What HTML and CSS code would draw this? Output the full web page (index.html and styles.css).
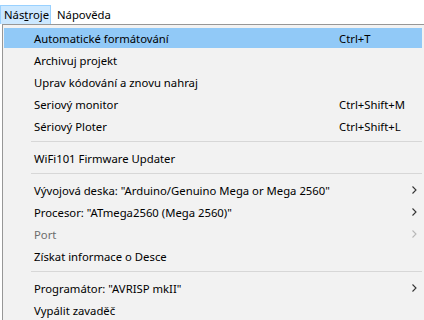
FILE: index.html
```html
<html>
<head>
	<title>Nástroje</title>
	<meta charset='UTF-8'>
	<link rel="stylesheet" href="styles.css">
</head>
<body>
	<div class='menubar'>
		<span class='top open'>Nás<u>t</u>roje</span>
		<span class='top'>Nápověda</span>
	</div>
	<div class='popup'>
		<div class='item hot'><span class='label'>Automatické formátování</span><span class='keys'>Ctrl+T</span></div>
		<div class='item'><span class='label'>Archivuj projekt</span></div>
		<div class='item'><span class='label'>Uprav kódování a znovu nahraj</span></div>
		<div class='item'><span class='label'>Seriový monitor</span><span class='keys'>Ctrl+Shift+M</span></div>
		<div class='item'><span class='label'>Sériový Ploter</span><span class='keys'>Ctrl+Shift+L</span></div>
		<div class='sep'></div>
		<div class='item'><span class='label'>WiFi101 Firmware Updater</span></div>
		<div class='sep'></div>
		<div class='item'><span class='label'>Vývojová deska: "Arduino/Genuino Mega or Mega 2560"</span>
			<svg class='arrow' width='5' height='8' viewBox='0 0 5 8'><path d='M0.5 0.5 L4 4 L0.5 7.5' fill='none' stroke='#333' stroke-width='1.1'/></svg></div>
		<div class='item'><span class='label'>Procesor: "ATmega2560 (Mega 2560)"</span>
			<svg class='arrow' width='5' height='8' viewBox='0 0 5 8'><path d='M0.5 0.5 L4 4 L0.5 7.5' fill='none' stroke='#333' stroke-width='1.1'/></svg></div>
		<div class='item off'><span class='label'>Port</span>
			<svg class='arrow' width='5' height='8' viewBox='0 0 5 8'><path d='M0.5 0.5 L4 4 L0.5 7.5' fill='none' stroke='#b8b8b8' stroke-width='1.1'/></svg></div>
		<div class='item'><span class='label'>Získat informace o Desce</span></div>
		<div class='sep'></div>
		<div class='item'><span class='label'>Programátor: "AVRISP mkII"</span>
			<svg class='arrow' width='5' height='8' viewBox='0 0 5 8'><path d='M0.5 0.5 L4 4 L0.5 7.5' fill='none' stroke='#333' stroke-width='1.1'/></svg></div>
		<div class='item'><span class='label'>Vypálit zavaděč</span></div>
	</div>
</body>
</html>
```

FILE: styles.css
```css
body {
	margin: 0;
	background: #ffffff;
	font-family: 'Noto Sans', 'Open Sans', sans-serif;
	font-size: 11.3px;
	color: #000000;
	overflow: hidden;
}
div.menubar {
	display: flex;
	height: 19px;
	padding-top: 5px;
}
span.top {
	display: block;
	height: 19px;
	line-height: 18px;
	padding: 0 5px 0 5px;
	box-sizing: border-box;
	border: 1px solid transparent;
}
span.top.open {
	background: #cce8ff;
	border-color: #99d1ff;
	border-bottom: none;
	padding-left: 3px;
	width: 51px;
}
div.popup {
	margin-left: 2px;
	width: 430px;
	background: #f2f2f2;
	border-left: 1px solid #979797;
	border-top: 1px solid #979797;
	padding: 2px 0 0 1px;
}
div.item {
	display: flex;
	align-items: center;
	width: 418px;
	height: 22px;
	box-sizing: border-box;
	padding-left: 30px;
	padding-right: 5px;
}
div.item.hot {
	background: #91c9f7;
	border-top: 1px solid #f2f2f2;
	border-bottom: 1px solid #f2f2f2;
}
div.item.off {
	color: #6d6d6d;
}
span.label {
	flex: 1;
	white-space: nowrap;
}
span.keys {
	width: 78px;
	white-space: nowrap;
}
div.sep {
	height: 10px;
	margin-left: 27px;
	width: 391px;
	box-sizing: border-box;
	border-top: 4px solid #f2f2f2;
	border-bottom: 5px solid #f2f2f2;
	background: #d7d7d7;
}
```
